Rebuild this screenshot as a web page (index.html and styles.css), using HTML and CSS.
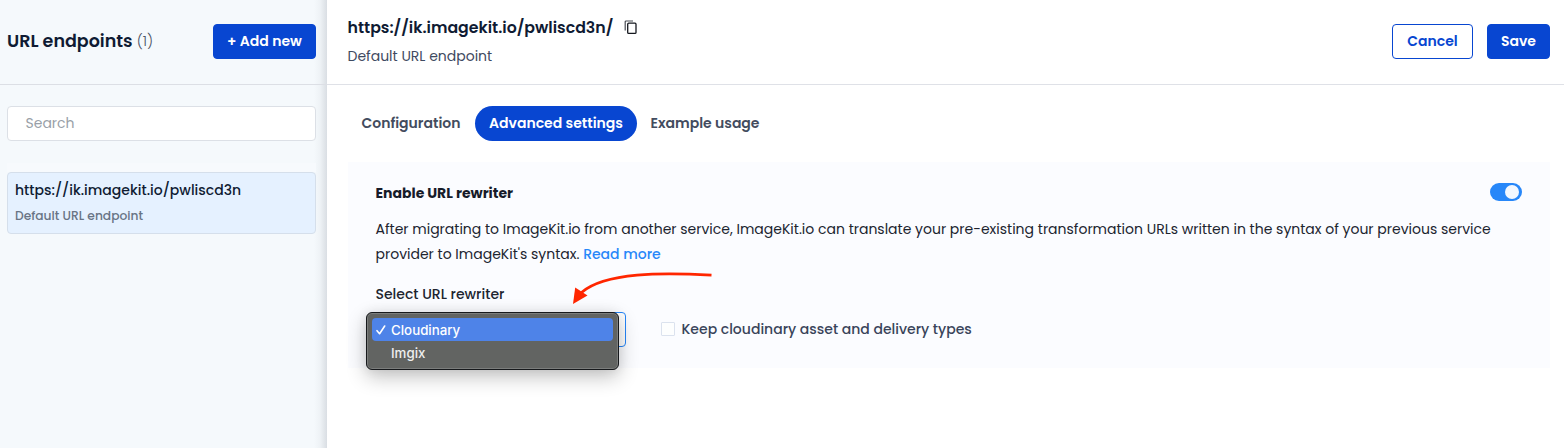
FILE: index.html
```html
<!DOCTYPE html>
<html lang="en">
<head>
<meta charset="utf-8">
<title>URL endpoints</title>
<link rel="stylesheet" href="styles.css">
</head>
<body>
<div class="app">
  <aside class="sidebar">
    <header class="sidebar-header">
      <h1 class="sidebar-title"><span class="title-text">URL endpoints</span><span class="count">(1)</span></h1>
      <button class="btn btn-primary add-btn"><span class="add-label">+ Add new</span></button>
    </header>
    <div class="sidebar-body">
      <div class="search"><span class="search-label">Search</span></div>
      <div class="list-edge"></div>
      <div class="endpoint">
        <div class="endpoint-url"><span>https://ik.imagekit.io/pwliscd3n</span></div>
        <div class="endpoint-desc"><span>Default URL endpoint</span></div>
      </div>
    </div>
  </aside>
  <main class="main">
    <header class="main-header">
      <div class="heading">
        <div class="heading-row">
          <h2 class="heading-url"><span>https://ik.imagekit.io/pwliscd3n/</span></h2>
          <svg class="copy-icon" width="14" height="16" viewBox="0 0 14 16" fill="none">
            <path d="M1.2 10.6V1.9Q1.2 1 2.1 1H9" stroke="#4a4e56" stroke-width="1.2"/>
            <rect x="3.7" y="3.2" width="8.3" height="10.2" rx="1" stroke="#15181f" stroke-width="1.3"/>
          </svg>
        </div>
        <div class="heading-desc"><span>Default URL endpoint</span></div>
      </div>
      <div class="actions">
        <button class="btn btn-outline cancel"><span class="cancel-label">Cancel</span></button>
        <button class="btn btn-primary save"><span class="save-label">Save</span></button>
      </div>
    </header>
    <nav class="tabs">
      <a class="tab tab-config"><span>Configuration</span></a>
      <a class="tab tab-advanced active"><span>Advanced settings</span></a>
      <a class="tab tab-example"><span>Example usage</span></a>
    </nav>
    <section class="card">
      <div class="card-top">
        <h3 class="card-title"><span>Enable URL rewriter</span></h3>
        <div class="toggle"><div class="knob"></div></div>
      </div>
      <p class="para"><span class="line-one">After migrating to ImageKit.io from another service, ImageKit.io can translate your pre-existing transformation URLs written in the syntax of your previous service</span><br><span class="line-two">provider to ImageKit's syntax.</span> <a class="link">Read more</a></p>
      <div class="select-label"><span>Select URL rewriter</span></div>
      <div class="fields">
        <div class="select">
          <div class="menu">
            <div class="option selected">
              <svg class="check" width="12" height="12" viewBox="0 0 12 12" fill="none"><path d="M2 6.7L4.6 9.7L9.7 2" stroke="#fff" stroke-width="1.6" stroke-linecap="round" stroke-linejoin="round"/></svg>
              <span class="opt-cloud">Cloudinary</span>
            </div>
            <div class="option"><span class="check"></span><span class="opt-imgix">Imgix</span></div>
          </div>
        </div>
        <div class="checkbox"></div>
        <div class="keep"><span>Keep cloudinary asset and delivery types</span></div>
      </div>
      <svg class="arrow" width="142" height="36" viewBox="0 0 142 36" fill="none">
        <path d="M141.5 5.2C93 2.5 35 2 11.5 22.5" stroke="#ff2600" stroke-width="2.8"/>
        <path d="M3 34L5.2 17.5L17.5 25.6Z" fill="#ff2600"/>
      </svg>
    </section>
  </main>
</div>
</body>
</html>
```
FILE: styles.css
```css
* { box-sizing: border-box; }
body { margin: 0; font-family: Poppins, Inter, "Open Sans", sans-serif; font-size: 14px; color: #1b1f2b; background: #fff; }
h1, h2, h3, p { margin: 0; font-weight: 400; }
span, .link { white-space: nowrap; }
.app { display: flex; height: 448px; overflow: hidden; }

.sidebar { width: 327px; flex: none; background: linear-gradient(to right, transparent 314px, rgba(30, 40, 60, .03) 320px, rgba(30, 40, 60, .13) 327px), #f5f9fc; }
.sidebar-header { height: 85px; border-bottom: 1px solid #dcdfe5; padding: 0 11px 2px 7px; display: flex; align-items: center; justify-content: space-between; }
.sidebar-title { display: flex; align-items: center; gap: 4px; color: #0f1b33; font-size: 17.5px; line-height: 24px; }
.title-text { font-weight: 600; }
.count { font-size: 14.5px; font-weight: 300; color: #4c5465; }
.btn { height: 35px; border-radius: 4px; border: 1px solid #0846d1; font: inherit; font-weight: 600; padding: 0; display: flex; align-items: center; justify-content: center; }
.btn-primary { background: #0846d1; color: #fff; }
.btn-outline { background: #fff; color: #0846d1; }
.add-btn { width: 103px; }
.sidebar-body { padding: 21px 11px 0 7px; }
.search { height: 35px; border: 1px solid #dce0e6; border-radius: 4px; background: #fff; padding-left: 17.5px; display: flex; align-items: center; color: #999fa8; }
.list-edge { height: 9px; margin-top: 22px; background: #f7fafd; }
.endpoint { height: 62px; border: 1px solid #d5dfeb; border-radius: 4px; background: #e5f1ff; padding: 5px 7px; }
.endpoint-url { line-height: 24px; font-weight: 500; color: #101c33; }
.endpoint-desc { margin-top: 1px; line-height: 26px; font-size: 12.25px; font-weight: 500; color: #687485; }

.main { flex: 1; min-width: 0; background: #fff; }
.main-header { height: 85px; border-bottom: 1px solid #dfe1e7; padding: 0 14px 0 20.5px; display: flex; justify-content: space-between; }
.heading { padding-top: 15px; }
.heading-row { display: flex; align-items: center; gap: 10.5px; height: 25px; }
.heading-url { font-size: 15.75px; font-weight: 600; color: #0f1b33; }
.heading-desc { margin-top: 4px; line-height: 24px; color: #3f4a61; }
.actions { display: flex; gap: 14px; padding-top: 24px; }
.cancel { width: 81px; }
.save { width: 63px; }
.tabs { display: flex; padding: 21px 0 0 21px; }
.tab { height: 35px; border-radius: 18px; font-weight: 600; color: #434c5e; display: flex; align-items: center; justify-content: center; }
.tab-config { width: 127px; padding-right: 1px; }
.tab-advanced { width: 162px; }
.tab-example { width: 137px; padding-right: 1px; }
.tab.active { background: #0846d1; color: #fff; }

.card { position: relative; margin: 21px 14px 0 21px; height: 206px; background: #fbfcff; padding: 20px 28px 0 27.5px; }
.card-top { display: flex; justify-content: space-between; height: 22px; line-height: 22px; }
.card-title { font-size: 14px; font-weight: 700; color: #161b29; }
.toggle { width: 32px; height: 18px; margin-top: 1px; border-radius: 9px; background: #2787f9; display: flex; align-items: center; justify-content: flex-end; padding-right: 3px; }
.knob { width: 14px; height: 14px; border-radius: 50%; background: #f3f8ff; }
.para { margin-top: 13px; line-height: 25px; color: #20242f; }
.link { font-weight: 500; color: #2787f9; }
.select-label { margin-top: 16px; line-height: 22px; font-weight: 500; color: #20242f; }
.fields { display: flex; align-items: center; margin-top: 7px; height: 35px; }
.select { position: relative; width: 250.5px; height: 35px; border: 1px solid #2787f9; border-radius: 4px; background: #fff; }
.menu { position: absolute; left: -10.5px; top: -1px; width: 253px; height: 58px; border: 1px solid #17191c; border-radius: 6px; background: #626462; box-shadow: inset 0 0 0 1px #7c7e7d, 0 7px 20px rgba(0, 0, 0, .24), 0 0 12px rgba(0, 0, 0, .07); padding: 5px; }
.option { height: 23px; border-radius: 4px; display: flex; align-items: center; color: #efefef; font-family: Inter, sans-serif; font-size: 13.3px; font-weight: 500; padding-left: 3px; }
.option.selected { background: #4e83e8; color: #fff; }
.check { width: 12px; margin-right: 4px; flex: none; }
.checkbox { width: 14px; height: 14px; margin: 0 0 2px 35px; border: 1px solid #dbe2ee; border-radius: 1px; background: #fdfefe; }
.keep { margin-left: 6.5px; font-weight: 500; color: #39445a; }
.arrow { position: absolute; left: 222px; top: 108px; }
```
